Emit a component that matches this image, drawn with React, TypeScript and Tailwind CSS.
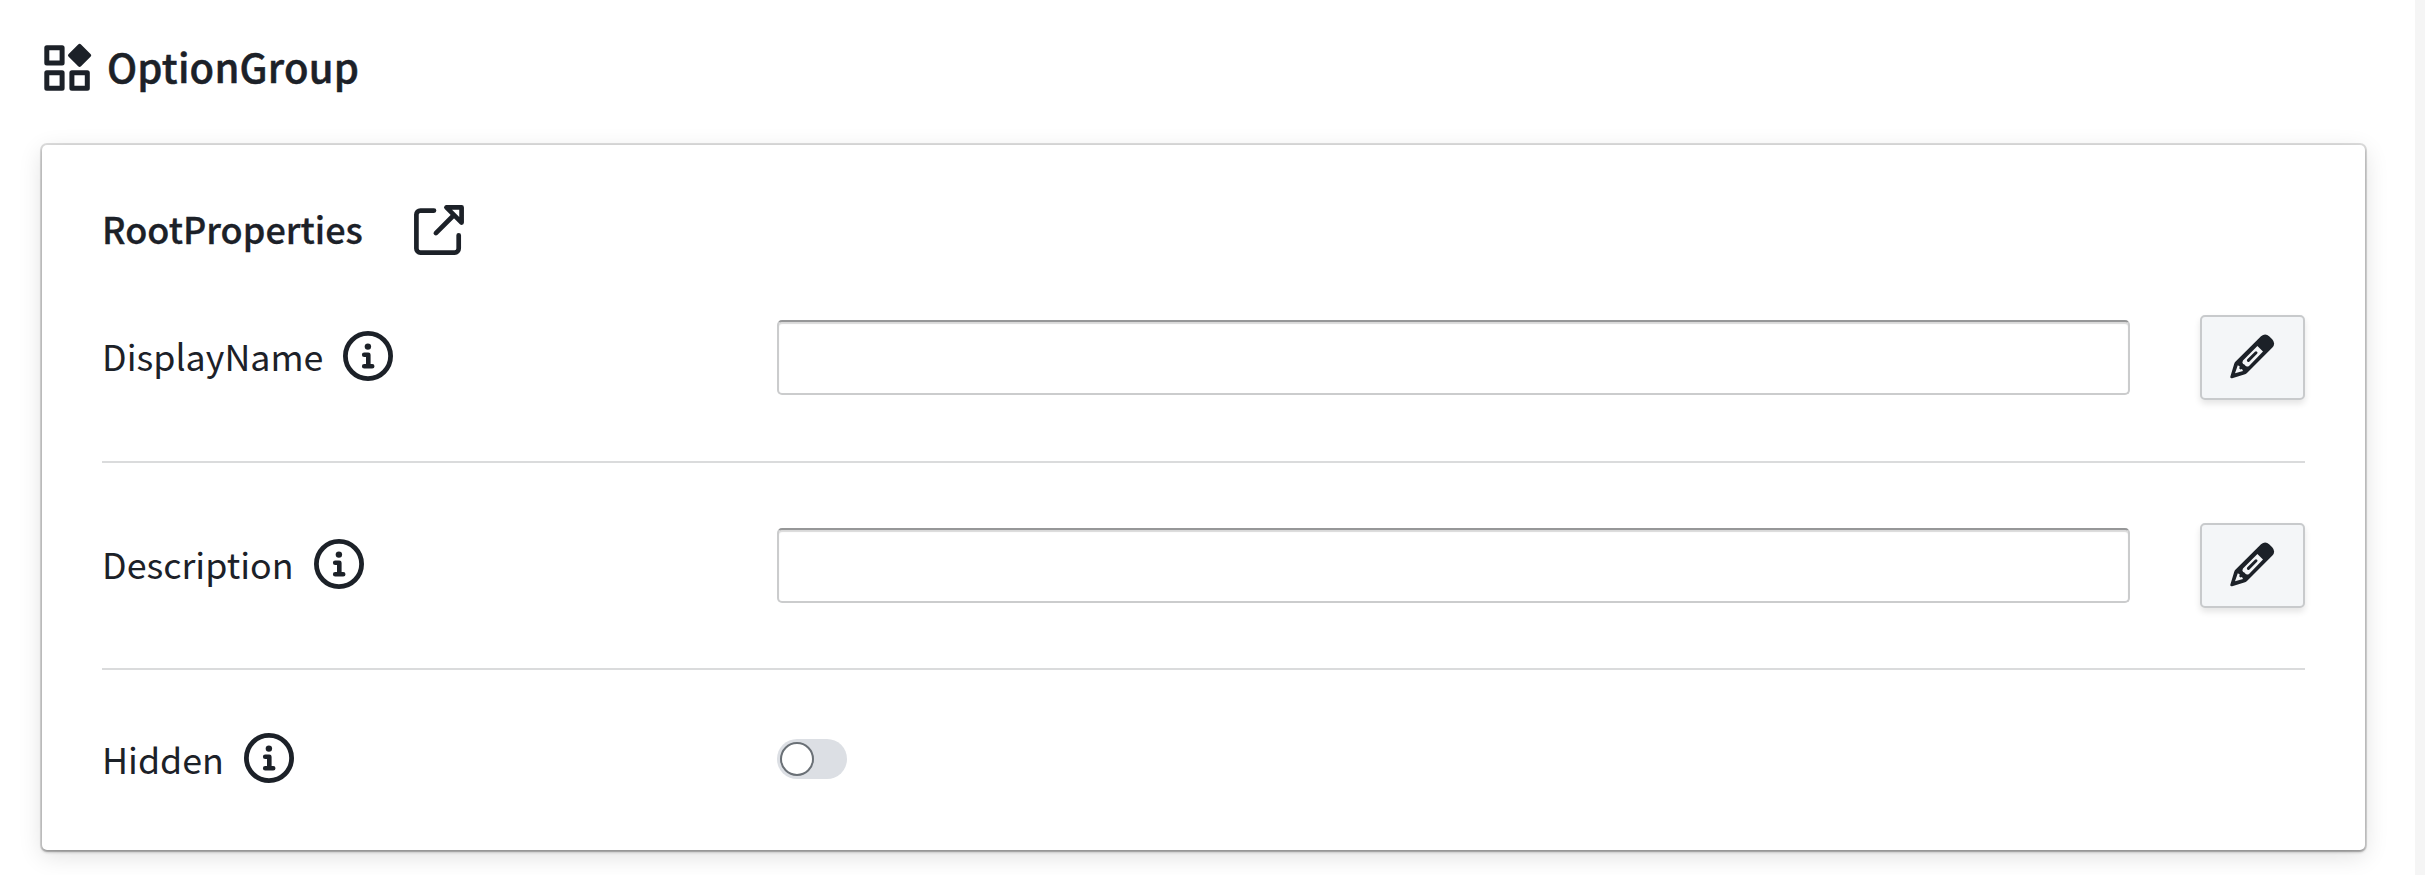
import type { ReactNode } from "react";

function ComponentIcon() {
  return (
    <svg className="h-[48px] w-[50px] shrink-0" viewBox="0 0 50 48" fill="none" stroke="currentColor" strokeWidth="5" strokeLinejoin="round">
      <path d="M4.8 4.8h15.3v15.3H4.8zM4.8 29.8h15.3v15.4H4.8zM29.9 29.8h15.4v15.4H29.9z" />
      <path d="M37.6 2.8l9.5 9.5-9.5 9.5-9.5-9.5z" fill="currentColor" strokeWidth="4" />
    </svg>
  );
}

function ExternalLinkIcon() {
  return (
    <svg className="h-[50px] w-[50px] shrink-0" viewBox="0 0 50 50" fill="none" stroke="currentColor" strokeWidth="4.7" strokeLinecap="round" strokeLinejoin="round">
      <path d="M20 5.6H6.4a4 4 0 0 0-4 4v34a4 4 0 0 0 4 4h34.3a4 4 0 0 0 4-4V30.3" />
      <path d="M21.9 28.1L39 11M32.4 2.4h15.2v15.2z" />
    </svg>
  );
}

function InfoIcon() {
  return (
    <svg className="relative -top-[2px] h-[50px] w-[50px] shrink-0" viewBox="0 0 50 50" fill="none" stroke="currentColor" strokeLinecap="round" strokeLinejoin="round">
      <circle cx="25" cy="25" r="22.6" strokeWidth="4.8" />
      <circle cx="24.9" cy="15.6" r="3.2" fill="currentColor" stroke="none" />
      <path d="M21.2 23.8h4.1v11M21.2 35.2h8" strokeWidth="4.6" />
    </svg>
  );
}

function PencilIcon() {
  return (
    <svg className="relative -top-[1.5px] h-[45px] w-[45px]" viewBox="0 0 45 45" fill="none">
      <path
        d="M.3 42.8L4 30.4Q4.4 28.8 5.6 27.6L31 2.2Q35.3-1.4 39.4 2.4L42.2 5.2Q46 9.4 42.4 13.6L17 38.9Q15.8 40.1 14.2 40.6L2.2 44.2Q.2 44.6.3 42.8z"
        fill="currentColor"
      />
      <path d="M27.4 12L33 17.4 19 32Q16.8 33.4 15.2 31.6 14.6 30.4 13.2 30 11.6 28.4 13 26.4z" fill="#f4f6f8" />
      <path d="M7.8 31.2L5 39.2 13 37 12 35 10.4 35.4 9.2 34.2 9.8 32.6z" fill="#f4f6f8" />
      <path d="M26 18.8L18.4 26.4" stroke="currentColor" strokeWidth="3" strokeLinecap="round" />
    </svg>
  );
}

interface PropertyRowProps {
  label: string;
  children: ReactNode;
}

function PropertyRow({ label, children }: PropertyRowProps) {
  return (
    <div className="flex min-h-[60px] items-center">
      <div className="flex w-[675px] shrink-0 items-center gap-5">
        <span className="mb-[5px] text-[35.8px] leading-[50px]">{label}</span>
        <InfoIcon />
      </div>
      {children}
    </div>
  );
}

function TextField({ label }: { label: string }) {
  return (
    <PropertyRow label={label}>
      <input
        aria-label={label}
        className="h-[75px] flex-1 rounded-[5px] border-2 border-[#cbcccd] border-t-[#969798] bg-white px-4 text-[36px] shadow-[inset_0_2px_1px_rgba(0,0,0,0.15)] outline-none"
      />
      <button
        aria-label={`Edit ${label}`}
        className="ml-[70px] flex h-[85px] w-[105px] items-center justify-center rounded-[5px] border-2 border-[#c8cacc] bg-[#f4f6f8] shadow-[0_4px_6px_rgba(0,0,0,0.1)]"
      >
        <PencilIcon />
      </button>
    </PropertyRow>
  );
}

function Toggle({ label }: { label: string }) {
  return (
    <button role="switch" aria-checked={false} aria-label={label} className="-mt-[2px] flex h-[40px] w-[70px] items-center rounded-full bg-[#dcdfe4] pl-[3px]">
      <span className="h-[34px] w-[34px] rounded-full border-2 border-[#6a7076] bg-white" />
    </button>
  );
}

export default function App() {
  return (
    <div className="flex h-[875px] w-[2425px] overflow-hidden bg-[#f5f5f5] font-['Noto_Sans_CJK_SC',sans-serif] text-[#1c2128]">
      <main className="w-[2415px] bg-white pl-[42px] pr-[50px]">
        <header className="flex h-[145px] items-start gap-[15px] pt-[43px]">
          <ComponentIcon />
          <h1 className="-mt-[2px] text-[40px] font-medium leading-[50px] tracking-[0.2px] [-webkit-text-stroke:0.5px_currentColor]">OptionGroup</h1>
        </header>
        <section className="rounded-[5px] bg-white p-[60px] shadow-[0_0_0_2px_rgba(0,0,0,0.13),0_2px_3px_rgba(0,0,0,0.3),0_6px_24px_rgba(0,0,0,0.12)]">
          <div className="mb-[60px] flex h-[50px] items-center gap-[51px]">
            <h2 className="mb-[5px] text-[36px] font-medium leading-[50px] [-webkit-text-stroke:0.3px_currentColor]">RootProperties</h2>
            <ExternalLinkIcon />
          </div>
          <TextField label="DisplayName" />
          <hr className="mb-[60px] mt-[61px] border-t-2 border-[#dadbdc]" />
          <TextField label="Description" />
          <hr className="my-[60px] border-t-2 border-[#dadbdc]" />
          <PropertyRow label="Hidden">
            <Toggle label="Hidden" />
          </PropertyRow>
        </section>
      </main>
    </div>
  );
}
